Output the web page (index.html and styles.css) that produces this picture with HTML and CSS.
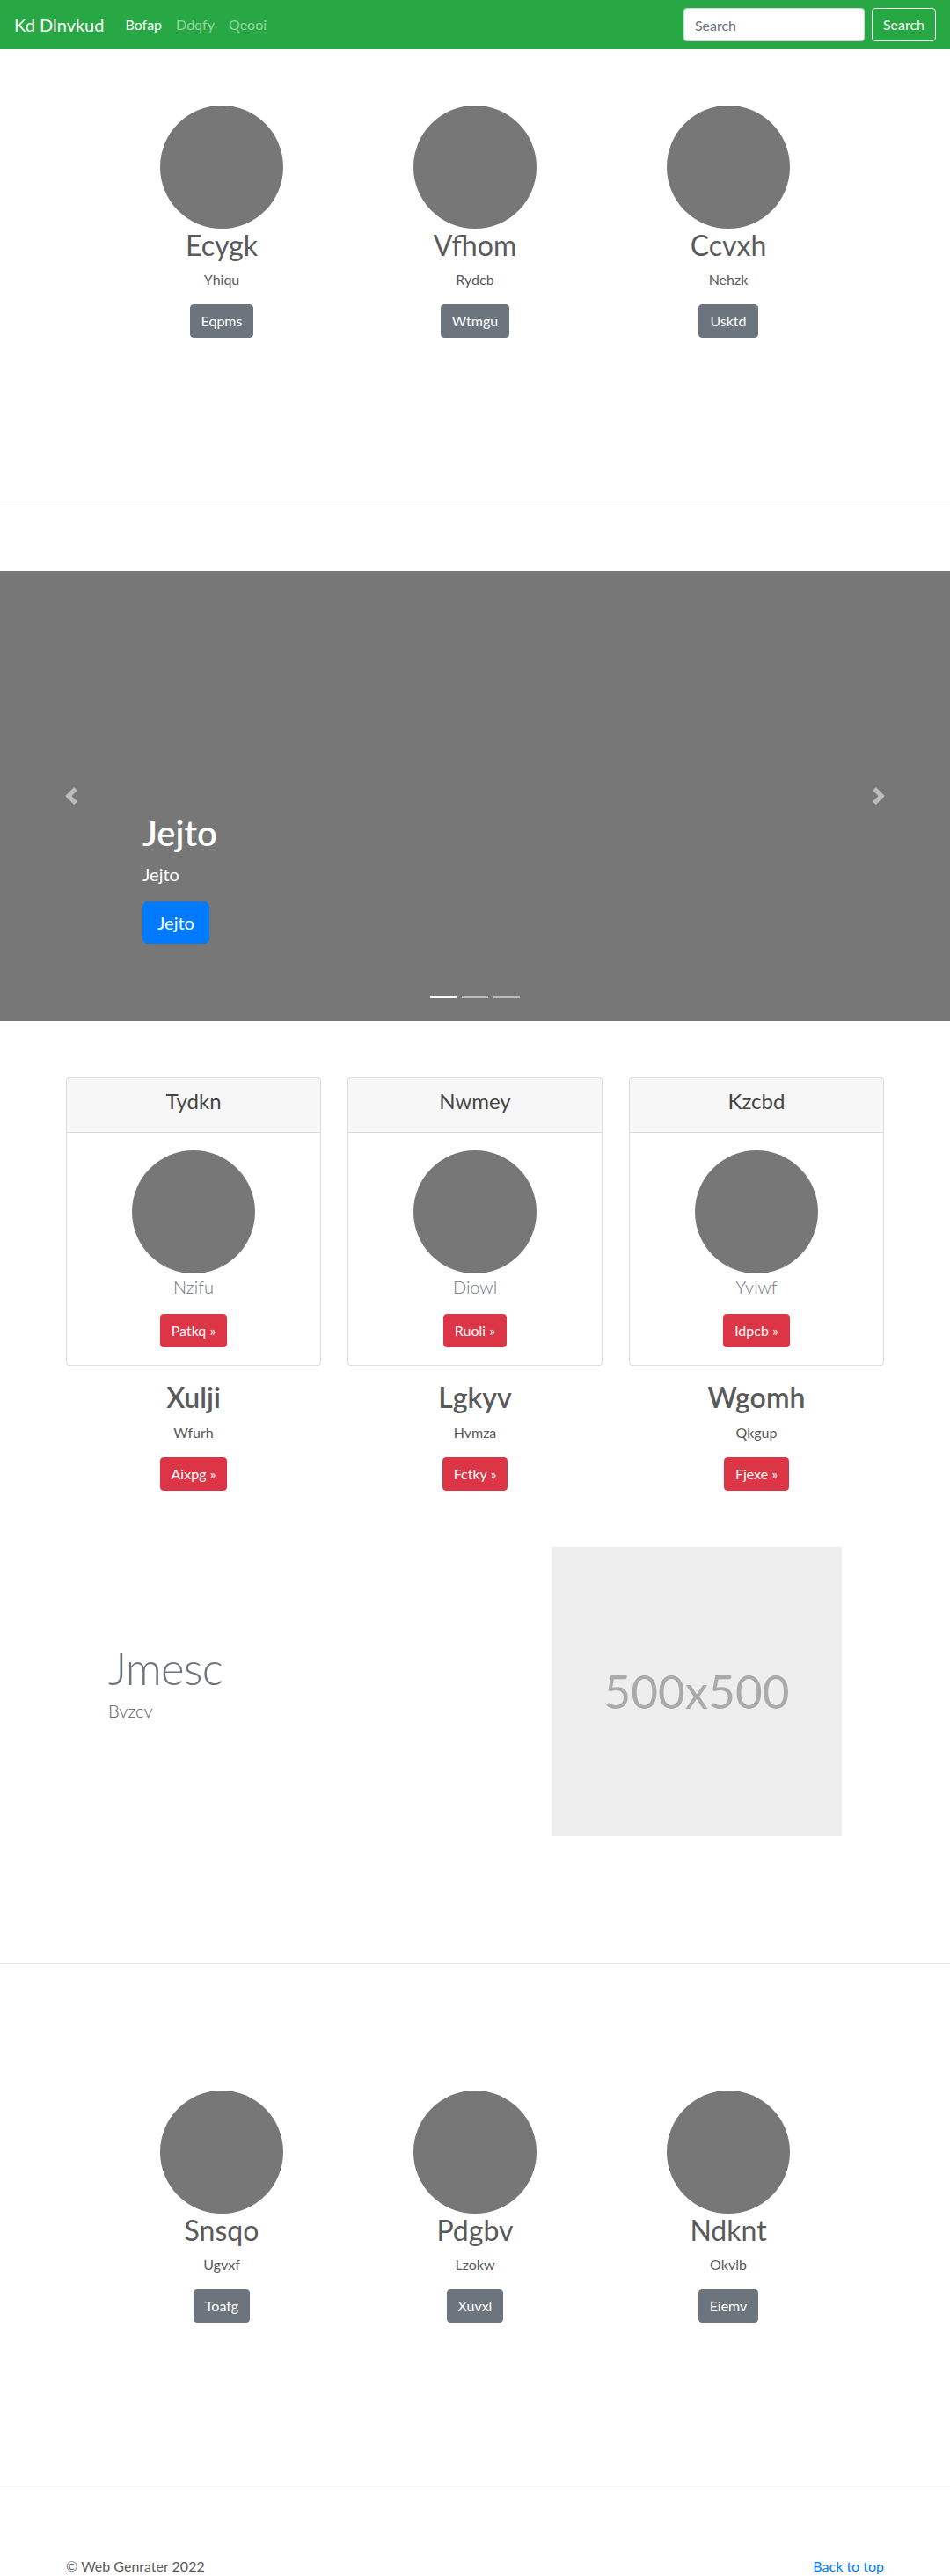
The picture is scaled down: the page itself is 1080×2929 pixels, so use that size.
FILE: index.html
```html
<!DOCTYPE html>
<html lang="en">
<head>
<meta charset="utf-8">
<title>Kd Dlnvkud</title>
<link rel="stylesheet" href="styles.css">
</head>
<body>
<nav class="navbar">
  <a class="brand" href="#">Kd Dlnvkud</a>
  <ul class="nav-links">
    <li><a class="nav-link active" href="#">Bofap</a></li>
    <li><a class="nav-link" href="#">Ddqfy</a></li>
    <li><a class="nav-link" href="#">Qeooi</a></li>
  </ul>
  <form class="search">
    <input class="search-input" type="text" placeholder="Search">
    <button class="btn btn-outline-light" type="button">Search</button>
  </form>
</nav>

<main>
  <section class="marketing">
    <div class="marketing-row">
      <div class="feature-col">
        <div class="circle"></div>
        <h2 class="col-title">Ecygk</h2>
        <p class="col-text">Yhiqu</p>
        <p class="col-action"><a class="btn btn-secondary" href="#">Eqpms</a></p>
      </div>
      <div class="feature-col">
        <div class="circle"></div>
        <h2 class="col-title">Vfhom</h2>
        <p class="col-text">Rydcb</p>
        <p class="col-action"><a class="btn btn-secondary" href="#">Wtmgu</a></p>
      </div>
      <div class="feature-col">
        <div class="circle"></div>
        <h2 class="col-title">Ccvxh</h2>
        <p class="col-text">Nehzk</p>
        <p class="col-action"><a class="btn btn-secondary" href="#">Usktd</a></p>
      </div>
    </div>
  </section>

  <hr class="divider">

  <div class="carousel">
    <a class="carousel-control prev" href="#">
      <svg width="20" height="20" viewBox="0 0 8 8"><path fill="#fff" d="M5.25 0l-4 4 4 4 1.5-1.5L4.25 4l2.5-2.5L5.25 0z"/></svg>
    </a>
    <div class="carousel-caption">
      <h1 class="caption-title">Jejto</h1>
      <p class="caption-text">Jejto</p>
      <p class="caption-action"><a class="btn btn-lg btn-primary" href="#">Jejto</a></p>
    </div>
    <a class="carousel-control next" href="#">
      <svg width="20" height="20" viewBox="0 0 8 8"><path fill="#fff" d="M2.75 0l-1.5 1.5L3.75 4l-2.5 2.5L2.75 8l4-4-4-4z"/></svg>
    </a>
    <ol class="indicators">
      <li class="active"></li>
      <li></li>
      <li></li>
    </ol>
  </div>

  <section class="cards-section">
    <div class="card-deck">
      <div class="card">
        <div class="card-header"><h4 class="card-title">Tydkn</h4></div>
        <div class="card-body">
          <div class="circle"></div>
          <p class="card-lead">Nzifu</p>
          <a class="btn btn-danger" href="#">Patkq »</a>
        </div>
      </div>
      <div class="card">
        <div class="card-header"><h4 class="card-title">Nwmey</h4></div>
        <div class="card-body">
          <div class="circle"></div>
          <p class="card-lead">Diowl</p>
          <a class="btn btn-danger" href="#">Ruoli »</a>
        </div>
      </div>
      <div class="card">
        <div class="card-header"><h4 class="card-title">Kzcbd</h4></div>
        <div class="card-body">
          <div class="circle"></div>
          <p class="card-lead">Yvlwf</p>
          <a class="btn btn-danger" href="#">Idpcb »</a>
        </div>
      </div>
    </div>
    <div class="info-row">
      <div class="info-col">
        <h2 class="info-title">Xulji</h2>
        <p class="info-text">Wfurh</p>
        <p class="info-action"><a class="btn btn-danger" href="#">Aixpg »</a></p>
      </div>
      <div class="info-col">
        <h2 class="info-title">Lgkyv</h2>
        <p class="info-text">Hvmza</p>
        <p class="info-action"><a class="btn btn-danger" href="#">Fctky »</a></p>
      </div>
      <div class="info-col">
        <h2 class="info-title">Wgomh</h2>
        <p class="info-text">Qkgup</p>
        <p class="info-action"><a class="btn btn-danger" href="#">Fjexe »</a></p>
      </div>
    </div>
  </section>

  <section class="featurette">
    <div class="featurette-text">
      <h2 class="featurette-heading">Jmesc</h2>
      <p class="featurette-lead">Bvzcv</p>
    </div>
    <div class="featurette-media">
      <div class="placeholder">500x500</div>
    </div>
  </section>

  <hr class="divider">

  <section class="marketing">
    <div class="marketing-row">
      <div class="feature-col">
        <div class="circle"></div>
        <h2 class="col-title">Snsqo</h2>
        <p class="col-text">Ugvxf</p>
        <p class="col-action"><a class="btn btn-secondary" href="#">Toafg</a></p>
      </div>
      <div class="feature-col">
        <div class="circle"></div>
        <h2 class="col-title">Pdgbv</h2>
        <p class="col-text">Lzokw</p>
        <p class="col-action"><a class="btn btn-secondary" href="#">Xuvxl</a></p>
      </div>
      <div class="feature-col">
        <div class="circle"></div>
        <h2 class="col-title">Ndknt</h2>
        <p class="col-text">Okvlb</p>
        <p class="col-action"><a class="btn btn-secondary" href="#">Eiemv</a></p>
      </div>
    </div>
  </section>

  <hr class="divider">
</main>

<footer class="footer">
  <p class="copyright">© Web Genrater 2022</p>
  <p class="back-top"><a href="#">Back to top</a></p>
</footer>
</body>
</html>
```

FILE: styles.css
```css
* { box-sizing: border-box; }

html, body {
  margin: 0;
  padding: 0;
}

body {
  font-family: "Segoe UI", Lato, "Open Sans", Roboto, Arial, sans-serif;
  font-size: 16px;
  line-height: 1.5;
  color: #5a5a5a;
  background: #fff;
  padding-bottom: 48px;
}

a { text-decoration: none; }

h1, h2, h4, p { margin: 0; }

/* ---------- Navbar ---------- */
.navbar {
  height: 56px;
  background: #28a745;
  display: flex;
  align-items: center;
  padding: 8px 16px;
}

.brand {
  font-size: 20px;
  line-height: 30px;
  color: #fff;
  margin-right: 16px;
}

.nav-links {
  list-style: none;
  display: flex;
  margin: 0;
  padding: 0;
  flex: 1;
}

.nav-link {
  display: block;
  padding: 8px;
  color: rgba(255, 255, 255, 0.5);
}

.nav-link.active { color: #fff; }

.search {
  display: flex;
  align-items: center;
  gap: 8px;
}

.search-input {
  width: 206px;
  height: 38px;
  padding: 6px 12px;
  font-family: inherit;
  font-size: 16px;
  color: #495057;
  background: #fff;
  border: 1px solid #ced4da;
  border-radius: 4px;
  outline: none;
}

.search-input::placeholder { color: #6c757d; }

/* ---------- Buttons ---------- */
.btn {
  display: inline-block;
  font-family: inherit;
  font-size: 16px;
  line-height: 1.5;
  font-weight: 400;
  padding: 6px 12px;
  border: 1px solid transparent;
  border-radius: 4px;
  color: #fff;
  background: transparent;
  cursor: pointer;
}

.btn-outline-light {
  color: #f8f9fa;
  border-color: #f8f9fa;
}

.btn-secondary { background: #6c757d; border-color: #6c757d; }
.btn-danger { background: #dc3545; border-color: #dc3545; }
.btn-primary { background: #007bff; border-color: #007bff; }

.btn-lg {
  font-size: 20px;
  padding: 8px 16px;
  border-radius: 6px;
}

/* ---------- Marketing columns ---------- */
.marketing { padding: 64px 0; }

.marketing-row {
  width: 864px;
  margin: 0 auto;
  display: grid;
  grid-template-columns: repeat(3, 1fr);
}

.feature-col {
  padding: 0 15px;
  margin-bottom: 24px;
  display: flex;
  flex-direction: column;
  align-items: center;
  text-align: center;
}

.circle {
  width: 140px;
  height: 140px;
  border-radius: 50%;
  background: #777;
  flex: none;
}

.col-title {
  font-size: 32px;
  font-weight: 400;
  line-height: 1.2;
  margin-bottom: 8px;
}

.col-text { margin-bottom: 16px; }
.col-action { margin-bottom: 16px; }

/* ---------- Divider ---------- */
.divider {
  border: 0;
  border-top: 1px solid rgba(0, 0, 0, 0.1);
  margin: 80px 0;
  height: 0;
}

/* ---------- Carousel ---------- */
.carousel {
  position: relative;
  height: 512px;
  background: #777;
  margin-bottom: 64px;
}

.carousel-control {
  position: absolute;
  top: 0;
  bottom: 0;
  width: 15%;
  display: flex;
  align-items: center;
  justify-content: center;
  opacity: 0.5;
}

.carousel-control.prev { left: 0; }
.carousel-control.next { right: 0; }

.carousel-caption {
  position: absolute;
  left: 15%;
  right: 15%;
  bottom: 52px;
  padding-top: 20px;
  padding-bottom: 20px;
  color: #fff;
  text-align: left;
}

.caption-title {
  font-size: 40px;
  font-weight: 600;
  line-height: 1.2;
  margin-bottom: 8px;
}

.caption-text {
  font-size: 20px;
  line-height: 1.5;
  margin-bottom: 16px;
}

.caption-action { margin-bottom: 16px; line-height: 1; }

.indicators {
  position: absolute;
  left: 0;
  right: 0;
  bottom: 0;
  margin: 0 0 16px;
  padding: 0;
  list-style: none;
  display: flex;
  justify-content: center;
}

.indicators li {
  width: 30px;
  height: 3px;
  margin: 10px 3px;
  background: #fff;
  opacity: 0.5;
}

.indicators li.active { opacity: 1; }

/* ---------- Cards ---------- */
.cards-section {
  width: 930px;
  margin: 0 auto;
}

.card-deck {
  display: grid;
  grid-template-columns: repeat(3, 1fr);
  gap: 30px;
  margin-bottom: 17px;
}

.card {
  border: 1px solid rgba(0, 0, 0, 0.125);
  border-radius: 4px;
  background: #fff;
  text-align: center;
}

.card-header {
  background: rgba(0, 0, 0, 0.03);
  border-bottom: 1px solid rgba(0, 0, 0, 0.125);
  padding: 12px 20px;
}

.card-title {
  font-size: 24px;
  font-weight: 400;
  line-height: 1.2;
  margin-bottom: 8px;
  color: #444;
}

.card-body {
  padding: 20px;
  display: flex;
  flex-direction: column;
  align-items: center;
}

.card-lead {
  font-size: 20px;
  font-weight: 300;
  line-height: 1.5;
  color: #6c757d;
  margin-bottom: 16px;
}

.info-row {
  display: grid;
  grid-template-columns: repeat(3, 1fr);
  gap: 30px;
  text-align: center;
}

.info-title {
  font-size: 32px;
  font-weight: 600;
  line-height: 1.2;
  margin-bottom: 8px;
}

.info-text { margin-bottom: 16px; }
.info-action { margin-bottom: 16px; line-height: 1; }

/* ---------- Featurette ---------- */
.featurette {
  width: 864px;
  margin: 48px auto 0;
  display: grid;
  grid-template-columns: 504px 360px;
  align-items: center;
  padding-bottom: 64px;
}

.featurette-text { padding: 0 15px; }

.featurette-heading {
  font-size: 51px;
  font-weight: 300;
  line-height: 1;
  letter-spacing: -0.8px;
  color: #6c757d;
  margin-bottom: 8px;
}

.featurette-lead {
  font-size: 20px;
  font-weight: 300;
  margin-bottom: 16px;
}

.featurette-media { padding: 0 15px; }

.placeholder {
  width: 330px;
  height: 329px;
  background: #eee;
  color: #aaa;
  font-size: 53px;
  display: flex;
  align-items: center;
  justify-content: center;
}

/* ---------- Footer ---------- */
.footer {
  width: 930px;
  margin: 0 auto;
  display: flex;
  justify-content: space-between;
}

.footer p { margin-bottom: 16px; }

.back-top a { color: #007bff; }
```
